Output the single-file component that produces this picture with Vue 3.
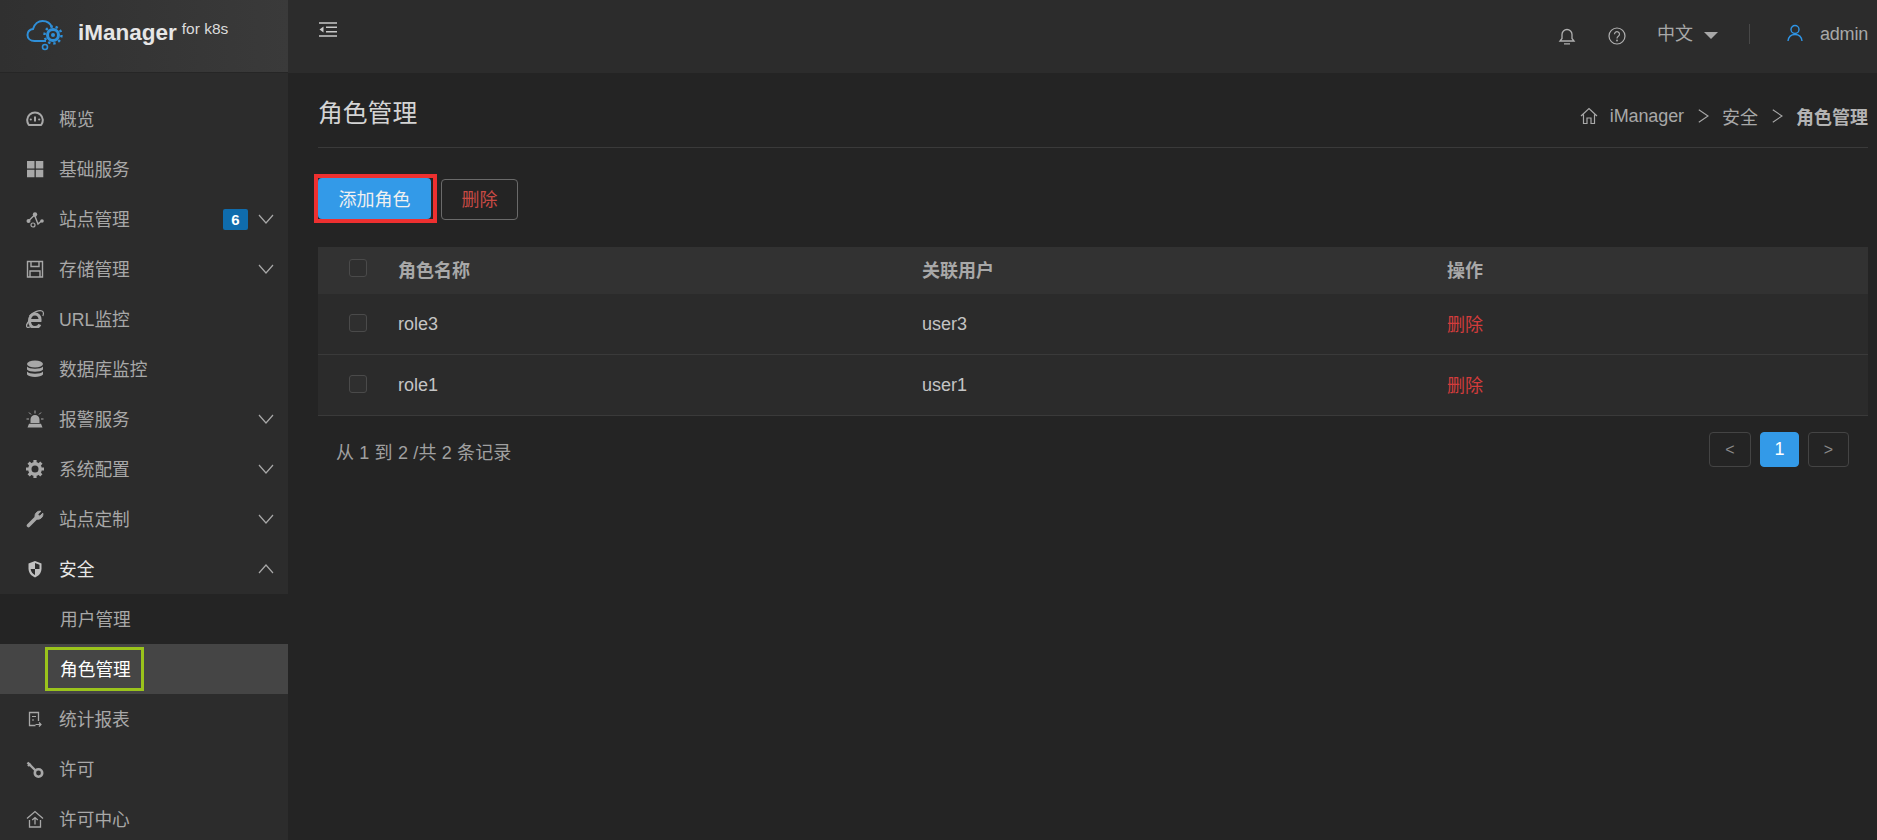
<script setup>
const g = '#a8a8a8'
const menu = [
  { label: '概览', icon: `<path d="M2.800 15A7.800 7.800 0 1 1 15.200 15Z" fill="none" stroke="${g}" stroke-width="2" stroke-linejoin="round"/><path d="M9 6.500V11.500" stroke="${g}" stroke-width="2"/><circle cx="4.800" cy="9.500" r="1.100" fill="${g}"/><circle cx="13.200" cy="9.500" r="1.100" fill="${g}"/>` },
  { label: '基础服务', icon: `<path d="M1 1h7.500v7.500H1zM9.800 1h7.500v7.500H9.800zM1 9.800h7.500v7.500H1zM9.800 9.800h7.500v7.500H9.800z" fill="${g}"/>` },
  { label: '站点管理', badge: '6', arrow: 'down', icon: `<path d="M2.500 11L8.500 5l3.500 9 4-3.500" fill="none" stroke="${g}" stroke-width="1.400"/><circle cx="2.500" cy="11" r="2" fill="${g}"/><circle cx="9" cy="4.500" r="2.200" fill="${g}"/><circle cx="7" cy="15" r="2" fill="none" stroke="${g}" stroke-width="1.200"/><circle cx="16" cy="11" r="1.800" fill="${g}"/>` },
  { label: '存储管理', arrow: 'down', icon: `<path d="M1.500 1.500h15v15.500h-15zM5 1.500v5h8v-5M4 17v-6h10v6" fill="none" stroke="${g}" stroke-width="1.400"/>` },
  { label: 'URL监控', icon: `<path d="M3.500 10.500h10.500C14.400 6.500 12 4 9 4s-5.500 2.800-5.500 7 2.500 6.500 5.500 6.500c2.400 0 4-1 4.800-3" fill="none" stroke="${g}" stroke-width="3"/><path d="M3.500 6C7 2 13 0 16 1c2 .8 1.500 3.500.8 5M4 10C1 13 0 16 1 17c1 .8 2.500.3 4-.5" fill="none" stroke="${g}" stroke-width="1.200"/>` },
  { label: '数据库监控', icon: `<ellipse cx="9" cy="4" rx="8" ry="3.500" fill="${g}"/><path d="M1 6.500C3 9.500 15 9.500 17 6.500V9.500C15 12.500 3 12.500 1 9.500Z" fill="${g}"/><path d="M1 11.500C3 14.500 15 14.500 17 11.500V14.500C15 17.800 3 17.800 1 14.500Z" fill="${g}"/>` },
  { label: '报警服务', arrow: 'down', icon: `<path d="M4.500 13V9.500a4.500 4.500 0 0 1 9 0V13ZM3 13.800h12l1.500 3.700h-15z" fill="${g}"/><path d="M9 .5V3.500M3 2.500l2 2M15 2.500l-2 2M.5 9H3M15 9h2.500" stroke="${g}" stroke-width="1"/>` },
  { label: '系统配置', arrow: 'down', icon: `<circle cx="9" cy="9" r="5.200" fill="none" stroke="${g}" stroke-width="3.400"/><path d="M9 0v18M0 9h18M2.600 2.600l12.800 12.800M15.400 2.600 2.600 15.400" stroke="${g}" stroke-width="3.200" stroke-dasharray="3.500 11"/>` },
  { label: '站点定制', arrow: 'down', icon: `<path d="M2.500 15.500 10 8" stroke="${g}" stroke-width="3.600" stroke-linecap="round"/><path d="M9 6.500A5 5 0 0 1 15 1.200L11.800 4.300 13.700 6.200 16.800 3.200A5 5 0 0 1 10.500 9Z" fill="${g}" stroke="${g}" stroke-width="1"/>` },
  { label: '安全', arrow: 'up', active: true, icon: `<path d="M9 1l6.500 2.500v5c0 4.500-3 7.500-6.500 9-3.500-1.500-6.500-4.500-6.500-9v-5Z" fill="#c0c0c0"/><path d="M9 3v6h4.500v-.5V4.800ZM9 9v6C6.800 13.800 5 12 4.600 9Z" fill="#2c2c2c"/>` }
]
const subMenu = [
  { label: '用户管理' },
  { label: '角色管理', selected: true }
]
const menuAfter = [
  { label: '统计报表', icon: `<path d="M12.500 11V2.500H3.500v13h6" fill="none" stroke="${g}" stroke-width="1.300"/><path d="M6 6.500h4M6 10h2M9.500 14.500h5M13 12.500l2 2-2 2" fill="none" stroke="${g}" stroke-width="1.200"/>` },
  { label: '许可', icon: `<path d="M1.500 2.500 9.500 10.500M2 6l2.500-2.500" stroke="${g}" stroke-width="2.400"/><circle cx="12.500" cy="13" r="3.700" fill="none" stroke="${g}" stroke-width="2.600"/>` },
  { label: '许可中心', icon: `<path d="M1 8.500 9 1.500l8 7M3.500 10v7h11v-7" fill="none" stroke="${g}" stroke-width="1.300"/><path d="M9 14.500V7.500M6.200 10 9 7.500l2.800 2.500" fill="none" stroke="${g}" stroke-width="1.300"/>` }
]
const rows = [
  { name: 'role3', user: 'user3' },
  { name: 'role1', user: 'user1' }
]
</script>

<template>
  <div class="app">
    <aside class="side">
      <div class="brand">
        <svg class="logo" viewBox="0 0 40 36" width="40" height="36">
          <path d="M21 24H9.500C5.500 24 2.500 21.500 2.500 18c0-3.200 2.500-5.500 5.500-6C9.500 7 13.500 4 17.500 4c4.500 0 8 2.500 9.500 6.500" fill="none" stroke="#2f8fd8" stroke-width="2"/>
          <circle cx="28" cy="18" r="5.500" fill="none" stroke="#2f8fd8" stroke-width="3"/>
          <circle cx="28" cy="18" r="8.500" fill="none" stroke="#2f8fd8" stroke-width="2.400" stroke-dasharray="2.400 2.900"/>
          <circle cx="28" cy="18" r="2" fill="#2f8fd8"/>
          <circle cx="20" cy="30" r="2.500" fill="none" stroke="#2f8fd8" stroke-width="1.600"/>
        </svg>
        <span class="brand-name">iManager</span>
        <span class="brand-sub">for k8s</span>
      </div>
      <nav class="nav">
        <div v-for="m in menu" :key="m.label" class="item" :class="{ active: m.active }">
          <svg class="ico" viewBox="0 0 18 18" width="18" height="18" v-html="m.icon"></svg>
          <span class="label">{{ m.label }}</span>
          <span v-if="m.badge" class="badge">{{ m.badge }}</span>
          <svg v-if="m.arrow" class="arrow" :class="{ up: m.arrow === 'up' }" viewBox="0 0 16 10" width="16" height="10">
            <path d="M1 1l7 8 7-8" fill="none" stroke="#a8a8a8" stroke-width="1.200"/>
          </svg>
        </div>
        <div class="sub">
          <div v-for="s in subMenu" :key="s.label" class="sub-item" :class="{ selected: s.selected }">
            <span class="sub-label">{{ s.label }}</span>
          </div>
        </div>
        <div v-for="m in menuAfter" :key="m.label" class="item">
          <svg class="ico" viewBox="0 0 18 18" width="18" height="18" v-html="m.icon"></svg>
          <span class="label">{{ m.label }}</span>
        </div>
      </nav>
    </aside>

    <div class="right">
      <header class="top">
        <svg class="fold" viewBox="0 0 18 15" width="18" height="15">
          <path d="M0 1h18M7 5.300h11M7 9.700h11M0 14h18" stroke="#c8c8c8" stroke-width="1.600"/>
          <path d="M4.500 4.500v6L0.500 7.500Z" fill="#c8c8c8"/>
        </svg>
        <div class="top-right">
          <svg class="t-ico" viewBox="0 0 18 18" width="18" height="18">
            <path d="M2 14h14l-2-2.500V7.500a5 5 0 0 0-10 0v4ZM6 16.800h6" fill="none" stroke="#b0b0b0" stroke-width="1.300"/>
          </svg>
          <svg class="t-ico q" viewBox="0 0 18 18" width="18" height="18">
            <circle cx="9" cy="9" r="8" fill="none" stroke="#b0b0b0" stroke-width="1.200"/>
            <path d="M6.500 7.200a2.500 2.500 0 1 1 3.800 2.100C9.300 10 9 10.500 9 11.500" fill="none" stroke="#b0b0b0" stroke-width="1.200"/>
            <circle cx="9" cy="13.500" r=".9" fill="#b0b0b0"/>
          </svg>
          <span class="lang">中文</span>
          <span class="caret"></span>
          <span class="vline"></span>
          <svg class="user" viewBox="0 0 18 18" width="18" height="18">
            <circle cx="9" cy="5.500" r="4" fill="none" stroke="#2f95e6" stroke-width="1.400"/>
            <path d="M2 17c.5-4 3-6.500 7-6.500s6.500 2.500 7 6.500" fill="none" stroke="#2f95e6" stroke-width="1.400"/>
          </svg>
          <span class="admin">admin</span>
        </div>
      </header>

      <main class="main">
        <div class="page-head">
          <h1 class="title">角色管理</h1>
          <div class="crumbs">
            <svg class="home" viewBox="0 0 18 18" width="18" height="18">
              <path d="M1 9l8-7.500L17 9M3.500 7.500V16.500h3.500V11h4v5.500h3.500V7.500" fill="none" stroke="#a8a8a8" stroke-width="1.200"/>
            </svg>
            <span class="c-first">iManager</span>
            <svg class="sep" viewBox="0 0 11 14" width="11" height="14"><path d="M.8 .8 10 7 .8 13.200" fill="none" stroke="#a8a8a8" stroke-width="1.100"/></svg>
            <span>安全</span>
            <svg class="sep" viewBox="0 0 11 14" width="11" height="14"><path d="M.8 .8 10 7 .8 13.200" fill="none" stroke="#a8a8a8" stroke-width="1.100"/></svg>
            <b>角色管理</b>
          </div>
        </div>

        <div class="actions">
          <span class="mark"><button class="btn primary">添加角色</button></span>
          <button class="btn ghost">删除</button>
        </div>

        <div class="table">
          <div class="tr th">
            <span class="cb-cell"><span class="cb"></span></span>
            <span>角色名称</span>
            <span>关联用户</span>
            <span>操作</span>
          </div>
          <div v-for="r in rows" :key="r.name" class="tr td">
            <span class="cb-cell"><span class="cb"></span></span>
            <span>{{ r.name }}</span>
            <span>{{ r.user }}</span>
            <span class="del">删除</span>
          </div>
        </div>

        <div class="foot">
          <span class="count">从 1 到 2 /共 2 条记录</span>
          <div class="pager">
            <span class="pg">&lt;</span>
            <span class="pg cur">1</span>
            <span class="pg last">&gt;</span>
          </div>
        </div>
      </main>
    </div>
  </div>
</template>

<style>
html, body { margin: 0; background: #242424; overflow: hidden; }
</style>

<style scoped>
.app {
  display: flex;
  height: 840px;
  overflow: hidden;
  background: #242424;
  font-family: "Liberation Sans", "Noto Sans CJK SC", sans-serif;
  font-size: 18px;
  color: #a8a8a8;
}
.side { width: 288px; flex: none; background: #2c2c2c; overflow: hidden; }
.brand {
  height: 73px;
  box-sizing: border-box;
  display: flex;
  align-items: flex-start;
  padding: 17px 0 0 25px;
  background: linear-gradient(90deg, #303030, #3a3a3a);
  border-bottom: 1px solid #262626;
}
.logo { flex: none; margin-right: 13px; }
.brand-name { font-size: 22.500px; font-weight: 700; color: #e6e6e6; line-height: 33px; margin-top: -1px; }
.brand-sub { font-size: 15.500px; color: #dcdcdc; margin: 0 0 0 5px; line-height: 24px; }
.nav { padding-top: 21px; }
.item { height: 50px; display: flex; align-items: center; padding-left: 26px; }
.item.active { color: #e8e8e8; }
.ico { flex: none; margin-right: 15px; }
.label { flex: 1; font-size: 17.700px; padding-bottom: 2px; }
.badge {
  width: 25px;
  height: 21px;
  line-height: 21px;
  text-align: center;
  background: #0f6cad;
  color: #fff;
  font-weight: 700;
  font-size: 15px;
  border-radius: 2px;
  margin-right: 10px;
}
.arrow { flex: none; margin-right: 14px; }
.arrow.up { transform: rotate(180deg); }
.sub { background: #242424; }
.sub-item { height: 50px; display: flex; align-items: center; padding-left: 45px; }
.sub-item.selected { background: #454545; color: #fff; }
.sub-label { padding: 12px 13px 10px 15px; box-sizing: border-box; height: 44px; line-height: 22px; font-size: 17.700px; }
.sub-item.selected .sub-label { outline: 3px solid #9ac31c; outline-offset: -3px; }

.right { flex: 1; min-width: 0; display: flex; flex-direction: column; }
.top {
  height: 73px;
  flex: none;
  box-sizing: border-box;
  background: #2c2c2c;
  display: flex;
  justify-content: space-between;
  padding: 22px 9px 0 31px;
}
.fold { flex: none; }
.top-right { display: flex; align-items: flex-start; height: 24px; margin-top: -1px; }
.top-right > * { flex: none; }
.t-ico { margin: 6px 32px 0 0; }
.t-ico.q { margin-right: 31px; }
.lang { line-height: 24px; margin: 1px 11px 0 0; }
.caret {
  width: 0; height: 0;
  border-left: 7px solid transparent;
  border-right: 7px solid transparent;
  border-top: 7px solid #a8a8a8;
  margin: 11px 31px 0 0;
}
.vline { width: 1px; height: 20px; background: #484848; margin: 3px 36px 0 0; }
.user { margin: 3px 16px 0 0; }
.admin { line-height: 24px; letter-spacing: -.2px; margin-top: 1px; }

.main { flex: 1; padding: 0 9px 0 30px; }
.page-head {
  height: 75px;
  box-sizing: border-box;
  border-bottom: 1px solid #3a3a3a;
  display: flex;
  justify-content: space-between;
  align-items: flex-start;
}
.title { margin: 23px 0 0; font-size: 24.800px; font-weight: 400; color: #d4d4d4; line-height: 36px; }
.crumbs { display: flex; align-items: center; margin-top: 31px; height: 24px; }
.home { margin-right: 12px; }
.c-first { letter-spacing: -.1px; }
.sep { margin: 0 13px 0 14px; }
.crumbs b { color: #b4b4b4; font-weight: 700; }
.actions { display: flex; align-items: center; gap: 4px; height: 99px; box-sizing: border-box; }
.mark {
  display: flex;
  box-sizing: border-box;
  width: 123px;
  height: 49px;
  margin: 2px 0 0 -4px;
  border: 4px solid #ee3030;
  padding-right: 2px;
}
.btn {
  font: inherit;
  border-radius: 4px;
  padding: 0 0 2px;
  text-align: center;
}
.primary {
  flex: 1;
  background: #339ae8;
  color: #f0f0f0;
  border: 0;
}
.ghost {
  width: 77px;
  height: 41px;
  background: transparent;
  color: #c84a44;
  border: 1px solid #6a6a6a;
  margin-top: 3px;
}
.table { background: #2b2b2b; }
.tr {
  display: grid;
  grid-template-columns: 80px 524px 525px 1fr;
  align-items: center;
  box-sizing: border-box;
}
.th { height: 47px; background: #323232; font-weight: 700; color: #a8a8a8; padding-bottom: 3px; }
.td { height: 61px; border-bottom: 1px solid #3a3a3a; color: #c4c4c4; }
.cb-cell { display: flex; justify-content: center; padding-bottom: 2px; }
.cb { width: 18px; height: 18px; box-sizing: border-box; border: 1px solid #4a4a4a; border-radius: 3px; background: #2f2f2f; }
.del { color: #d23c3c; padding-bottom: 2px; }
.foot {
  display: flex;
  justify-content: space-between;
  align-items: center;
  height: 35px;
  margin-top: 16px;
  padding: 0 19px 0 18px;
}
.count { color: #a0a0a0; letter-spacing: .15px; margin-top: 3px; }
.pager { display: flex; gap: 9px; }
.pg {
  width: 42px;
  height: 35px;
  box-sizing: border-box;
  border: 1px solid #444;
  border-radius: 4px;
  display: flex;
  align-items: center;
  justify-content: center;
  color: #8a8a8a;
  font-size: 16px;
}
.pg.last { width: 41px; }
.pg.cur { width: 39px; background: #339ae8; border-color: #339ae8; color: #fff; font-size: 18px; font-weight: 400; }
</style>
